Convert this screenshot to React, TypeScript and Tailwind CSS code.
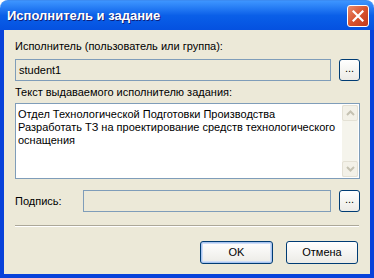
const font = { fontFamily: '"Liberation Sans", Arial, sans-serif' };

function DotsButton() {
  return (
    <button className="w-[21px] h-[22px] shrink-0 rounded-[3px] border border-[#003C74] bg-gradient-to-b from-white to-[#ECEBE6] text-[11px] leading-none text-black flex items-end justify-center pb-[6px]">
      ...
    </button>
  );
}

function Chevron({ up }: { up?: boolean }) {
  return (
    <svg width="9" height="6" viewBox="0 0 9 6">
      <path
        d={up ? 'M1 5 L4.5 1.5 L8 5' : 'M1 1 L4.5 4.5 L8 1'}
        fill="none"
        stroke="#C5C2B2"
        strokeWidth="2"
      />
    </svg>
  );
}

export default function App() {
  return (
    <div className="w-[374px] h-[278px] flex flex-col text-[11px] text-black" style={font}>
      {/* title bar */}
      <div className="h-[30px] shrink-0 rounded-t-[8px] bg-gradient-to-b from-[#3D95FF] via-[#0A5FE8] to-[#0551E0] flex items-center pl-[7px] pr-[5px] border-t border-[#3C8CF3]">
        <span className="flex-1 text-white font-bold text-[13px] [text-shadow:1px_1px_0_#0F1F7A]">
          Исполнитель и задание
        </span>
        <div className="w-[22px] h-[22px] rounded-[3px] border border-white bg-gradient-to-br from-[#E98A6B] via-[#D8532E] to-[#C0391A] flex items-center justify-center">
          <svg width="12" height="12" viewBox="0 0 12 12">
            <path d="M1.5 1.5 L10.5 10.5 M10.5 1.5 L1.5 10.5" stroke="white" strokeWidth="2.2" strokeLinecap="square" />
          </svg>
        </div>
      </div>

      {/* client area */}
      <div className="flex-1 flex flex-col bg-[#ECE9D8] border-x-4 border-b-4 border-[#0842DA] pl-[11px] pr-[10px]">
        <div className="mt-[10px] h-[13px] leading-[13px]">Исполнитель (пользователь или группа):</div>
        <div className="mt-[6px] flex gap-[8px]">
          <div className="flex-1 h-[22px] border border-[#7F9DB9] bg-[#ECE9D8] flex items-center px-[3px]">student1</div>
          <DotsButton />
        </div>

        <div className="mt-[5px] h-[13px] leading-[13px]">Текст выдаваемого исполнителю задания:</div>
        <div className="mt-[4px] h-[76px] border border-[#7F9DB9] bg-white flex">
          <div className="flex-1 pl-[2px] pt-[4px] leading-[13px]">
            Отдел Технологической Подготовки Производства
            <br />
            Разработать ТЗ на проектирование средств технологического
            <br />
            оснащения
          </div>
          <div className="w-[16px] mr-[1px] my-[1px] bg-[#F5F4EC] flex flex-col justify-between">
            <div className="h-[16px] rounded-[2px] border border-[#E4E1D5] bg-[#F3F1E8] flex items-center justify-center">
              <Chevron up />
            </div>
            <div className="h-[16px] rounded-[2px] border border-[#E4E1D5] bg-[#F3F1E8] flex items-center justify-center">
              <Chevron />
            </div>
          </div>
        </div>

        <div className="mt-[11px] flex items-center gap-[8px]">
          <div className="w-[60px]">Подпись:</div>
          <div className="flex-1 h-[22px] border border-[#7F9DB9] bg-[#ECE9D8]" />
          <DotsButton />
        </div>

        <div className="mt-[13px] h-[2px] border-t border-[#ACA899] border-b border-b-white mr-[1px]" />

        <div className="mt-[14px] flex justify-end gap-[13px] pr-[2px]">
          <button className="w-[73px] h-[23px] rounded-[3px] border border-[#003C74] bg-gradient-to-b from-white to-[#ECEBE6] shadow-[inset_0_0_0_1px_#A9C5F0,inset_0_0_0_2px_#CEDDF7] text-[11px]">
            OK
          </button>
          <button className="w-[72px] h-[23px] rounded-[3px] border border-[#003C74] bg-gradient-to-b from-white to-[#ECEBE6] text-[11px]">
            Отмена
          </button>
        </div>
      </div>
    </div>
  );
}
